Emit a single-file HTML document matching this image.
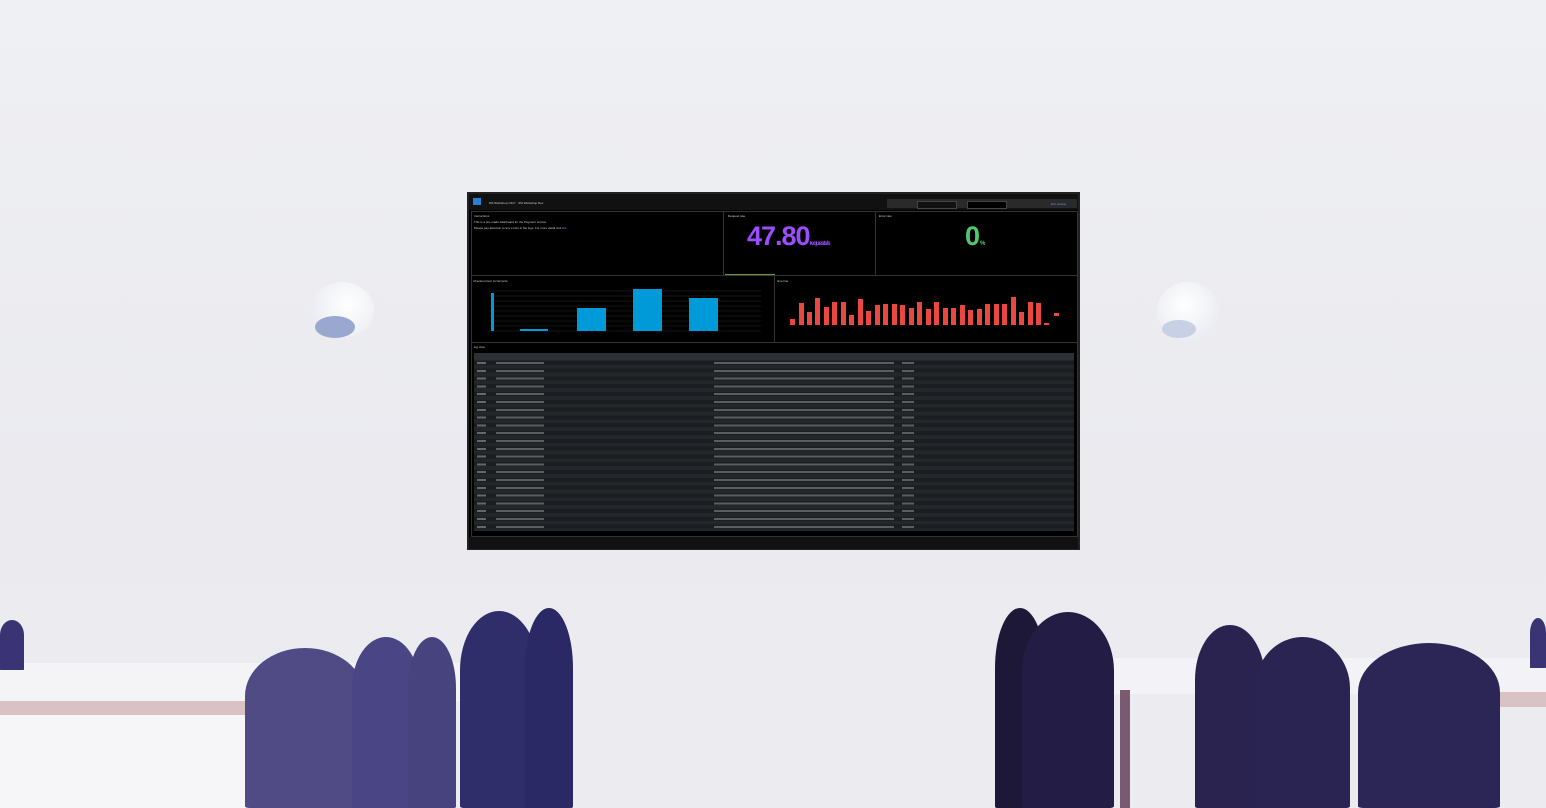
<!DOCTYPE html><html><head><style>
body{margin:0;width:1546px;height:808px;overflow:hidden;background:linear-gradient(#eff0f3,#eaeaef 60%,#ececf0);font-family:"Liberation Sans",sans-serif;position:relative}
.a{position:absolute}
.tv{left:467px;top:192px;width:613px;height:358px;background:#000;border:2px solid #222;box-sizing:border-box}
.t{color:#ccc;font-size:3px;white-space:nowrap}
.ch{position:absolute;background:#3b3468;border-radius:50% 50% 4% 4%/30% 30% 1% 1%}
</style></head><body>
<!-- lamps -->
<div class="a" style="left:310px;top:282px;width:64px;height:56px;border-radius:50%;background:radial-gradient(circle at 60% 40%,#fff,#e4e6ee)"></div>
<div class="a" style="left:315px;top:316px;width:40px;height:22px;border-radius:50%;background:#9aa8cf"></div>
<div class="a" style="left:1157px;top:282px;width:62px;height:58px;border-radius:50%;background:radial-gradient(circle at 45% 40%,#fff,#e4e6ee)"></div>
<div class="a" style="left:1162px;top:320px;width:34px;height:18px;border-radius:50%;background:#c8d0e6"></div>
<!-- tables -->
<div class="a" style="left:0;top:663px;width:485px;height:38px;background:#f4f3f6"></div>
<div class="a" style="left:0;top:701px;width:280px;height:14px;background:#d9c2c4"></div>
<div class="a" style="left:0;top:715px;width:250px;height:93px;background:#f6f6f8"></div>
<div class="a" style="left:1075px;top:658px;width:471px;height:36px;background:#f3f2f6"></div>
<div class="a" style="left:1480px;top:692px;width:66px;height:15px;background:#d9c2c4"></div>
<div class="a" style="left:1120px;top:690px;width:10px;height:118px;background:#7a5a70"></div>
<!-- chairs -->
<div class="ch" style="left:245px;top:648px;width:120px;height:160px;background:#504a85"></div>
<div class="ch" style="left:352px;top:637px;width:68px;height:171px;background:#4a4585"></div>
<div class="ch" style="left:408px;top:637px;width:48px;height:171px;background:#46437f"></div>
<div class="ch" style="left:460px;top:611px;width:78px;height:197px;background:#2f2d6a"></div>
<div class="ch" style="left:525px;top:608px;width:48px;height:200px;background:#2a2966"></div>
<div class="ch" style="left:0;top:620px;width:24px;height:50px;background:#3a3475"></div>
<div class="ch" style="left:995px;top:608px;width:50px;height:200px;background:#1d1838"></div>
<div class="ch" style="left:1022px;top:612px;width:92px;height:196px;background:#231d45"></div>
<div class="ch" style="left:1195px;top:625px;width:70px;height:183px;background:#2a2350"></div>
<div class="ch" style="left:1255px;top:637px;width:95px;height:171px;background:#2a2452"></div>
<div class="ch" style="left:1358px;top:643px;width:142px;height:165px;background:#2c2657"></div>
<div class="ch" style="left:1530px;top:618px;width:16px;height:50px;background:#3a3475"></div>
<!-- TV -->
<div class="a tv">
 <div class="a" style="left:0;top:0;width:609px;height:16px;background:#111"></div>
 <div class="a" style="left:4px;top:4px;width:8px;height:7px;background:#2a7fd4"></div>
 <div class="a t" style="left:20px;top:7px">iPA Workshop O11Y · IPA Workshop Dev</div>
 <div class="a" style="left:418px;top:5px;width:190px;height:9px;background:#2a2a2a"></div>
 <div class="a" style="left:448px;top:7px;width:38px;height:6px;background:#111;border:1px solid #444"></div>
 <div class="a" style="left:498px;top:7px;width:38px;height:6px;background:#000;border:1px solid #444"></div>
 <div class="a t" style="left:582px;top:8px;color:#4a9fef">Exit worksp</div>
 <div class="a" style="left:2px;top:17px;width:251px;height:63px;border:1px solid #333"></div>
 <div class="a t" style="left:5px;top:20px">Instructions</div>
 <div class="a t" style="left:5px;top:26px">This is a pre-made dashboard for the Payment service.</div>
 <div class="a t" style="left:5px;top:32px">Please pay attention to any errors in the logs. For more detail visit <span style="color:#4a9fef">link</span></div>
 <div class="a" style="left:254px;top:17px;width:151px;height:63px;border:1px solid #333"></div>
 <div class="a t" style="left:259px;top:20px">Request rate</div>
 <div class="a" style="left:278px;top:27px;color:#9b4dff;font-size:27px;font-weight:bold;letter-spacing:-1px">47.80<span style="font-size:6px">requests/s</span></div>
 <div class="a" style="left:406px;top:17px;width:201px;height:63px;border:1px solid #333"></div>
 <div class="a t" style="left:410px;top:20px">Error rate</div>
 <div class="a" style="left:496px;top:27px;color:#4ec972;font-size:27px;font-weight:bold">0<span style="font-size:6px">%</span></div>
 <div class="a" style="left:256px;top:80px;width:50px;height:1px;background:#6a9a30"></div>
 <div class="a" style="left:2px;top:81px;width:302px;height:66px;border:1px solid #333"></div>
 <div class="a t" style="left:4px;top:85px">Checkout item increments</div>
 <div class="a" style="left:305px;top:81px;width:302px;height:66px;border:1px solid #333"></div>
 <div class="a t" style="left:308px;top:85px">time line</div>
 <svg class="a" style="left:0;top:0" width="609" height="355">
  <g stroke="#2a2a2a" stroke-width="0.5"><line x1="20" y1="97" x2="292" y2="97"/><line x1="20" y1="102" x2="292" y2="102"/><line x1="20" y1="107" x2="292" y2="107"/><line x1="20" y1="112" x2="292" y2="112"/><line x1="20" y1="117" x2="292" y2="117"/><line x1="20" y1="122" x2="292" y2="122"/><line x1="20" y1="127" x2="292" y2="127"/><line x1="20" y1="132" x2="292" y2="132"/><line x1="20" y1="137" x2="292" y2="137"/></g>
  <g fill="#009ad8"><rect x="22" y="99" width="3" height="38"/><rect x="51" y="135" width="28" height="2"/><rect x="108" y="114" width="29" height="23"/><rect x="164" y="95" width="29" height="42"/><rect x="220" y="104" width="29" height="33"/></g>
  <g fill="#e8483f">
  <rect x="321" y="125" width="5" height="6"/><rect x="330" y="109" width="5" height="22"/><rect x="338" y="118" width="5" height="13"/><rect x="346" y="104" width="5" height="27"/><rect x="355" y="113" width="5" height="18"/><rect x="363" y="108" width="5" height="23"/><rect x="372" y="108" width="5" height="23"/><rect x="380" y="121" width="5" height="10"/><rect x="389" y="105" width="5" height="26"/><rect x="397" y="117" width="5" height="14"/><rect x="406" y="111" width="5" height="20"/><rect x="414" y="110" width="5" height="21"/><rect x="423" y="110" width="5" height="21"/><rect x="431" y="111" width="5" height="20"/><rect x="440" y="114" width="5" height="17"/><rect x="448" y="108" width="5" height="23"/><rect x="457" y="115" width="5" height="16"/><rect x="465" y="108" width="5" height="23"/><rect x="474" y="114" width="5" height="17"/><rect x="482" y="114" width="5" height="17"/><rect x="491" y="111" width="5" height="20"/><rect x="499" y="116" width="5" height="15"/><rect x="508" y="115" width="5" height="16"/><rect x="516" y="110" width="5" height="21"/><rect x="525" y="110" width="5" height="21"/><rect x="533" y="110" width="5" height="21"/><rect x="542" y="103" width="5" height="28"/><rect x="550" y="118" width="5" height="13"/><rect x="559" y="108" width="5" height="23"/><rect x="567" y="109" width="5" height="22"/><rect x="575" y="129" width="5" height="2"/><rect x="585" y="119" width="5" height="3"/></g>
 </svg>
 <div class="a" style="left:2px;top:148px;width:605px;height:193px;border:1px solid #333"></div>
 <div class="a t" style="left:5px;top:151px">log view</div>
 <div class="a" style="left:5px;top:159px;width:600px;height:178px;background:repeating-linear-gradient(#1b1d20 0 4px,#23262a 4px 7.8px)"></div>
 <div class="a" style="left:5px;top:159px;width:600px;height:7px;background:#2c2f33"></div>
 <div class="a" style="left:5px;top:166px;width:600px;height:170px;background:repeating-linear-gradient(90deg,transparent 0 3px,#999 3px 12px,transparent 12px 22px,#888 22px 70px,transparent 70px 240px,#888 240px 420px,transparent 420px 428px,#888 428px 440px,transparent 440px 600px);opacity:.6;-webkit-mask:repeating-linear-gradient(transparent 0 2px,#000 2px 4px,transparent 4px 7.8px)"></div>
 <div class="a" style="left:0;top:343px;width:609px;height:12px;background:#111"></div>
</div>
</body></html>
